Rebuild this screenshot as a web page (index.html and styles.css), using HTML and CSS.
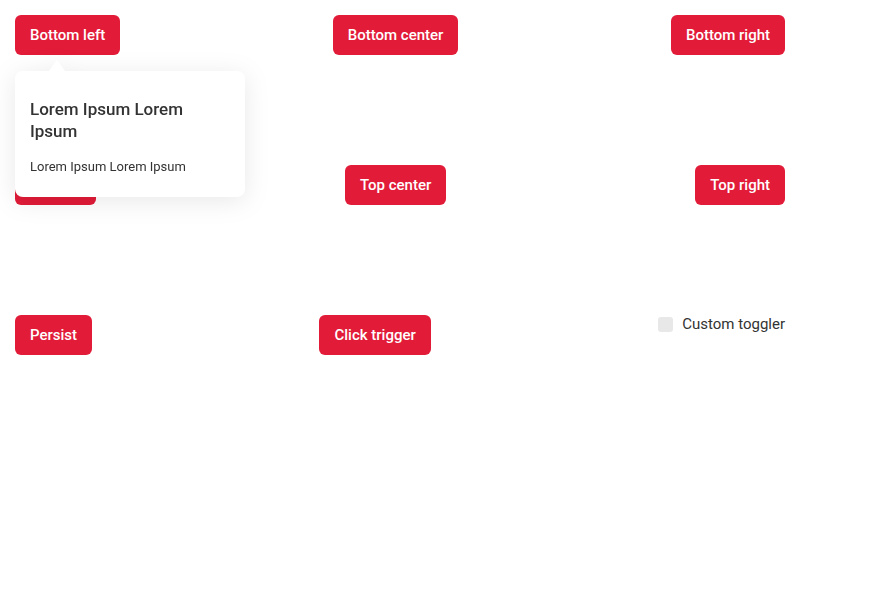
FILE: index.html
```html
<!DOCTYPE html>
<html>
<head>
<meta charset="utf-8">
<link rel="stylesheet" href="styles.css">
</head>
<body>
<div class="demo">
  <div class="row">
    <button class="btn">Bottom left</button>
    <button class="btn">Bottom center</button>
    <button class="btn">Bottom right</button>
  </div>
  <div class="row">
    <div class="anchor">
      <button class="btn">Top left</button>
      <div class="popover">
        <div class="pop-title">Lorem Ipsum Lorem Ipsum</div>
        <div class="pop-body">Lorem Ipsum Lorem Ipsum</div>
      </div>
    </div>
    <button class="btn">Top center</button>
    <button class="btn">Top right</button>
  </div>
  <div class="row">
    <button class="btn">Persist</button>
    <button class="btn">Click trigger</button>
    <label class="toggler"><span class="box"></span><span class="toggler-text">Custom toggler</span></label>
  </div>
</div>
</body>
</html>
```
FILE: styles.css
```css
html, body {
  margin: 0;
  background: #ffffff;
}
body {
  padding: 15px;
  font-family: Roboto, "Liberation Sans", sans-serif;
}
.demo {
  width: 770px;
  display: flex;
  flex-direction: column;
  gap: 110px;
}
.row {
  display: flex;
  justify-content: space-between;
  align-items: flex-start;
}
.btn {
  height: 40px;
  padding: 0 15px;
  border: 0;
  border-radius: 6px;
  background: #e11b38;
  color: #ffffff;
  font-family: Roboto, "Liberation Sans", sans-serif;
  font-weight: 500;
  font-size: 15px;
  line-height: 40px;
  cursor: pointer;
}
.anchor {
  position: relative;
}
.popover {
  position: absolute;
  left: 0;
  bottom: 8px;
  width: 230px;
  box-sizing: border-box;
  padding: 27px 15px 21px;
  background: #ffffff;
  border-radius: 8px;
  color: #333333;
  filter: drop-shadow(0 4px 12px rgba(0, 0, 0, 0.09));
}
.popover::before {
  content: "";
  position: absolute;
  left: 34px;
  top: -11px;
  border-left: 8.5px solid transparent;
  border-right: 8.5px solid transparent;
  border-bottom: 11px solid #ffffff;
}
.pop-title {
  font-size: 17px;
  font-weight: 500;
  line-height: 22px;
}
.pop-body {
  margin-top: 16px;
  font-size: 13px;
  line-height: 18px;
}
.toggler {
  display: flex;
  align-items: center;
  gap: 9px;
  height: 19px;
  color: #333333;
  font-size: 15px;
}
.box {
  width: 15px;
  height: 15px;
  border-radius: 3px;
  background: #e8e8e8;
}
.toggler-text {
  line-height: 19px;
}
```
